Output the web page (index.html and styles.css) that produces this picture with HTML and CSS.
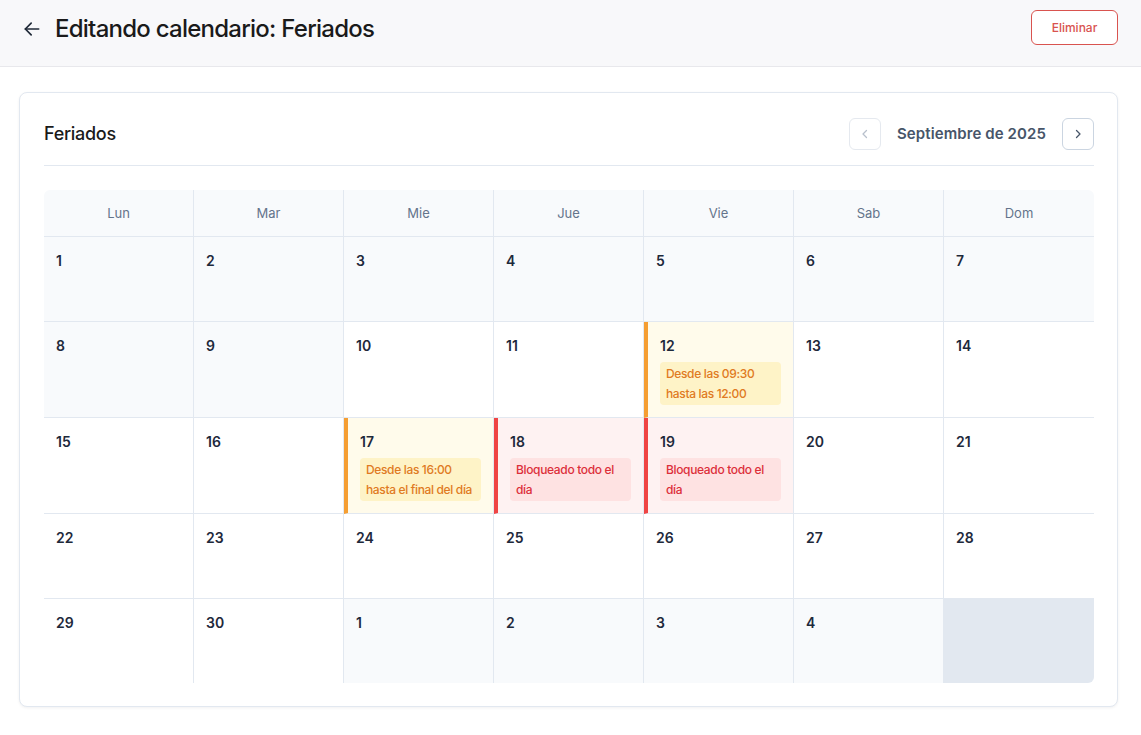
FILE: index.html
```html
<!DOCTYPE html>
<html lang="es">
<head>
<meta charset="utf-8">
<title>Editando calendario: Feriados</title>
<link rel="stylesheet" href="styles.css">
</head>
<body>
<header class="topbar">
  <div class="topbar-left">
    <svg class="back-icon" width="20" height="20" viewBox="0 0 24 24" fill="none" stroke="#1f2937" stroke-width="2" stroke-linecap="round" stroke-linejoin="round"><path d="M20 12H4"/><path d="M11 19l-7-7 7-7"/></svg>
    <h1 class="page-title">Editando calendario: Feriados</h1>
  </div>
  <button class="btn-danger">Eliminar</button>
</header>

<main class="main">
  <section class="card">
    <div class="card-head">
      <h2 class="card-title">Feriados</h2>
      <div class="month-nav">
        <button class="nav-btn disabled"><svg width="12" height="12" viewBox="0 0 12 12" fill="none" stroke="currentColor" stroke-width="1.3" stroke-linecap="round" stroke-linejoin="round"><path d="M7.5 2.5L4 6l3.5 3.5"/></svg></button>
        <span class="month-label">Septiembre de 2025</span>
        <button class="nav-btn"><svg width="12" height="12" viewBox="0 0 12 12" fill="none" stroke="currentColor" stroke-width="1.3" stroke-linecap="round" stroke-linejoin="round"><path d="M4.5 2.5L8 6l-3.5 3.5"/></svg></button>
      </div>
    </div>

    <div class="calendar">
      <div class="dow">Lun</div>
      <div class="dow">Mar</div>
      <div class="dow">Mie</div>
      <div class="dow">Jue</div>
      <div class="dow">Vie</div>
      <div class="dow">Sab</div>
      <div class="dow last-col">Dom</div>

      <div class="day past"><span class="num">1</span></div>
      <div class="day past"><span class="num">2</span></div>
      <div class="day past"><span class="num">3</span></div>
      <div class="day past"><span class="num">4</span></div>
      <div class="day past"><span class="num">5</span></div>
      <div class="day past"><span class="num">6</span></div>
      <div class="day past last-col"><span class="num">7</span></div>

      <div class="day past"><span class="num">8</span></div>
      <div class="day past"><span class="num">9</span></div>
      <div class="day"><span class="num">10</span></div>
      <div class="day"><span class="num">11</span></div>
      <div class="day partial"><span class="num">12</span><div class="tag">Desde las 09:30 hasta las 12:00</div></div>
      <div class="day"><span class="num">13</span></div>
      <div class="day last-col"><span class="num">14</span></div>

      <div class="day"><span class="num">15</span></div>
      <div class="day"><span class="num">16</span></div>
      <div class="day partial"><span class="num">17</span><div class="tag">Desde las 16:00 hasta el final del día</div></div>
      <div class="day blocked"><span class="num">18</span><div class="tag">Bloqueado todo el día</div></div>
      <div class="day blocked"><span class="num">19</span><div class="tag">Bloqueado todo el día</div></div>
      <div class="day"><span class="num">20</span></div>
      <div class="day last-col"><span class="num">21</span></div>

      <div class="day"><span class="num">22</span></div>
      <div class="day"><span class="num">23</span></div>
      <div class="day"><span class="num">24</span></div>
      <div class="day"><span class="num">25</span></div>
      <div class="day"><span class="num">26</span></div>
      <div class="day"><span class="num">27</span></div>
      <div class="day last-col"><span class="num">28</span></div>

      <div class="day last-row"><span class="num">29</span></div>
      <div class="day last-row"><span class="num">30</span></div>
      <div class="day last-row past"><span class="num">1</span></div>
      <div class="day last-row past"><span class="num">2</span></div>
      <div class="day last-row past"><span class="num">3</span></div>
      <div class="day last-row past"><span class="num">4</span></div>
      <div class="day last-row last-col empty"></div>
    </div>
  </section>
</main>
</body>
</html>
```

FILE: styles.css
```css
* { box-sizing: border-box; }

body {
  margin: 0;
  background: #ffffff;
  font-family: Inter, "Noto Sans", sans-serif;
  color: #1e293b;
}

.topbar {
  height: 67px;
  background: #f8f8fa;
  border-bottom: 1px solid #e8e8ec;
  display: flex;
  align-items: center;
  justify-content: space-between;
  padding: 0 23px 9px 22px;
}

.topbar-left {
  display: flex;
  align-items: center;
  gap: 13px;
}

.back-icon { display: block; }

.page-title {
  margin: 0;
  font-size: 24px;
  font-weight: 500;
  letter-spacing: -0.75px;
  color: #1a1a1a;
}

.btn-danger {
  width: 87px;
  height: 35px;
  border: 1px solid #d9534f;
  border-radius: 6px;
  background: #ffffff;
  color: #d9534f;
  font-family: inherit;
  font-size: 12px;
  font-weight: 500;
  margin-top: -3px;
}

.main {
  padding: 25px 23px 30px 19px;
}

.card {
  border: 1px solid #e2e8f0;
  border-radius: 8px;
  background: #fff;
  box-shadow: 0 1px 3px rgba(15, 23, 42, 0.06);
  padding: 24px 23px 23px 24px;
}

.card-head {
  display: flex;
  align-items: center;
  justify-content: space-between;
  height: 33px;
  margin-bottom: 24px;
  border-bottom: 1px solid #e2e8f0;
  box-sizing: content-box;
  padding-bottom: 15px;
}

.card-title {
  margin: 0;
  font-size: 18px;
  font-weight: 500;
  letter-spacing: -0.3px;
  color: #1a1a1a;
}

.month-nav {
  display: flex;
  align-items: center;
  gap: 16px;
}

.nav-btn {
  width: 32px;
  height: 32px;
  border: 1px solid #cbd5e1;
  border-radius: 6px;
  background: #fff;
  color: #475569;
  display: flex;
  align-items: center;
  justify-content: center;
  padding: 0;
}

.nav-btn.disabled {
  border-color: #e5e9ef;
  color: #b8c0cc;
}

.month-label {
  font-size: 15px;
  font-weight: 600;
  color: #475569;
  letter-spacing: 0.1px;
}

.calendar {
  display: grid;
  grid-template-columns: repeat(7, 150px);
  border-radius: 6px;
  overflow: hidden;
}

.dow {
  height: 47px;
  background: #f8fafc;
  border-right: 1px solid #e2e8f0;
  border-bottom: 1px solid #e2e8f0;
  display: flex;
  align-items: center;
  justify-content: center;
  font-size: 13px;
  color: #64748b;
}

.day {
  min-height: 85px;
  background: #ffffff;
  border-right: 1px solid #e2e8f0;
  border-bottom: 1px solid #e2e8f0;
  padding: 14px 12px 12px 12px;
  display: flex;
  flex-direction: column;
  gap: 6px;
}

.day.past { background: #f8fafc; }

.last-col { border-right: none; }
.last-row { border-bottom: none; min-height: 84px; }

.num {
  font-size: 14px;
  line-height: 20px;
  font-weight: 600;
  color: #1e293b;
}

.day.partial {
  background: #fffbeb;
  border-left: 4px solid #f59e32;
}

.day.blocked {
  background: #fef2f2;
  border-left: 4px solid #ef4444;
}

.tag {
  border-radius: 4px;
  padding: 2px 5px 1px 6px;
  font-size: 12px;
  line-height: 20px;
  font-weight: 500;
  letter-spacing: -0.35px;
}

.partial .tag {
  background: #fef3c7;
  color: #e07a22;
}

.blocked .tag {
  background: #fee2e2;
  color: #dc2f3a;
}

.day.empty { background: #e2e8f0; }
```
